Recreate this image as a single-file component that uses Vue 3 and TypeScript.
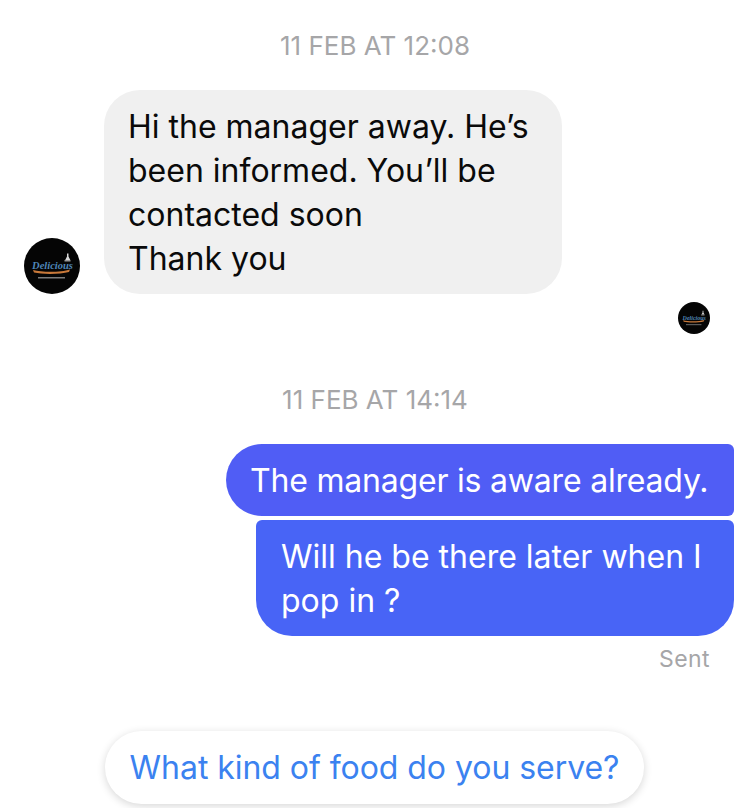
<script setup lang="ts">
const incoming = ['Hi the manager away. He’s', 'been informed. You’ll be', 'contacted soon', 'Thank you']
</script>

<template>
  <div class="thread">
    <div class="stamp first">11 FEB AT 12:08</div>

    <div class="row-in">
      <svg class="avatar" viewBox="0 0 56 56">
        <circle cx="28" cy="28" r="28" fill="#050505" />
        <path d="M43 15.500h1.500v3l1.800 3.500h-5.100l1.800-3.500z" fill="#d8d8d8" />
        <rect x="40.500" y="22" width="6" height="1.500" fill="#9a9a9a" />
        <text x="28.500" y="31" class="logo-word">Delicious</text>
        <path d="M9 32c9 2.500 28 2.500 37-.5l-1 2.500c-9 2.500-27 2.500-35 .5z" fill="#c9793a" />
        <rect x="14" y="39" width="27" height="1.500" fill="#7c7c7c" />
      </svg>
      <div class="bubble gray">
        <div v-for="line in incoming" :key="line">{{ line }}</div>
      </div>
    </div>

    <div class="seen">
      <svg class="avatar-small" viewBox="0 0 56 56">
        <circle cx="28" cy="28" r="28" fill="#050505" />
        <path d="M43 15.500h1.500v3l1.800 3.500h-5.100l1.800-3.500z" fill="#d8d8d8" />
        <rect x="40.500" y="22" width="6" height="1.500" fill="#9a9a9a" />
        <text x="28.500" y="31" class="logo-word">Delicious</text>
        <path d="M9 32c9 2.500 28 2.500 37-.5l-1 2.500c-9 2.500-27 2.500-35 .5z" fill="#c9793a" />
        <rect x="14" y="39" width="27" height="1.500" fill="#7c7c7c" />
      </svg>
    </div>

    <div class="stamp second">11 FEB AT 14:14</div>

    <div class="outgoing">
      <div class="bubble blue top">The manager is aware already.</div>
      <div class="bubble blue bottom">
        <div>Will he be there later when I</div>
        <div>pop in ?</div>
      </div>
      <div class="status">Sent</div>
    </div>

    <div class="chips">
      <button class="chip" type="button">What kind of food do you serve?</button>
    </div>
  </div>
</template>

<style>
html,
body {
  margin: 0;
  background: #fff;
  overflow: hidden;
}
</style>

<style scoped>
.thread {
  width: 750px;
  height: 808px;
  overflow: hidden;
  font-family: Inter, "Liberation Sans", sans-serif;
  background: #fff;
}

.stamp {
  text-align: center;
  font-size: 26px;
  line-height: 32px;
  color: #a6a6a8;
}

.first {
  padding-top: 30px;
}

.second {
  margin-top: 50px;
}

.row-in {
  display: flex;
  align-items: flex-end;
  gap: 24px;
  margin-top: 28px;
  padding-left: 24px;
}

.avatar {
  width: 56px;
  height: 56px;
}

.bubble {
  box-sizing: border-box;
  font-size: 32px;
  line-height: 44px;
  white-space: nowrap;
}

.gray {
  width: 458px;
  height: 204px;
  padding: 15px 24px;
  border-radius: 36px;
  background: #f0f0f0;
  color: #0a0a0a;
}

.seen {
  display: flex;
  justify-content: flex-end;
  margin-top: 8px;
  padding-right: 40px;
}

.avatar-small {
  width: 32px;
  height: 32px;
}

.logo-word {
  font-family: "Liberation Serif", serif;
  font-style: italic;
  font-weight: 700;
  font-size: 10.500px;
  text-anchor: middle;
  fill: #4f86b8;
}

.outgoing {
  display: flex;
  flex-direction: column;
  align-items: flex-end;
  gap: 4px;
  margin-top: 28px;
  padding-right: 16px;
}

.blue {
  color: #fff;
}

.top {
  width: 508px;
  height: 72px;
  padding: 15px 24px;
  border-radius: 36px 6px 6px 36px;
  background: #505df5;
  letter-spacing: -0.2px;
}

.bottom {
  width: 478px;
  height: 116px;
  padding: 15px 25px;
  border-radius: 6px 6px 36px 36px;
  background: #4864f6;
}

.status {
  margin-top: 6px;
  padding-right: 24px;
  font-size: 23px;
  line-height: 26px;
  letter-spacing: 0.4px;
  color: #a6a6a8;
}

.chips {
  margin-top: 59px;
  padding-left: 105px;
}

.chip {
  display: block;
  width: 539px;
  height: 73px;
  padding: 0;
  border: none;
  border-radius: 37px;
  background: #fff;
  box-shadow: 0 2px 8px rgba(0, 0, 0, 0.16);
  color: #3b82f0;
  font: inherit;
  font-size: 32px;
  letter-spacing: -0.05px;
  white-space: nowrap;
}
</style>
